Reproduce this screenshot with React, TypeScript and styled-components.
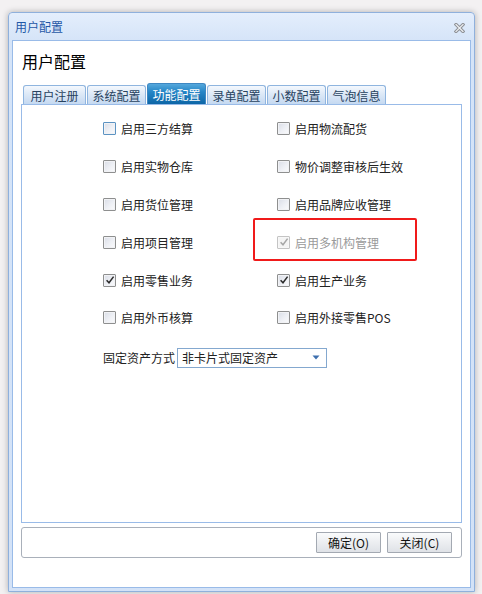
import React from "react";
import styled, { createGlobalStyle } from "styled-components";

const GlobalStyle = createGlobalStyle`
  html, body { margin: 0; padding: 0; background: #f3f1f2; }
  body { font-family: "Noto Sans CJK SC", "Noto Sans", sans-serif; font-size: 12px; color: #222; }
  * { box-sizing: border-box; }
`;

const Page = styled.div`
  padding: 12px 8px 0 8px;
  width: 482px;
  height: 594px;
`;

const Window = styled.div`
  width: 467px;
  height: 580px;
  border: 1px solid #8fb0dc;
  border-radius: 4px 4px 0 0;
  background: linear-gradient(#e4eefc 0px, #d5e4f8 28px, #d3e2f7 100%);
  box-shadow: 0 0 6px rgba(0, 0, 0, 0.28);
  padding: 0 3px 3px 3px;
  display: flex;
  flex-direction: column;
`;

const TitleBar = styled.div`
  height: 27px;
  display: flex;
  align-items: center;
  justify-content: space-between;
  padding: 0 6px 0 3px;
`;

const TitleText = styled.span`
  font-size: 12px;
  color: #1f57a6;
  line-height: 27px;
`;

const CloseTool = styled.span`
  width: 11px;
  height: 10px;
  display: inline-flex;
  margin-top: 2px;
`;

const Inner = styled.div`
  flex: 1;
  background: #fff;
  border: 1px solid #99bbe8;
  padding: 8px 8px 29px 8px;
  display: flex;
  flex-direction: column;
`;

const Heading = styled.div`
  font-size: 16px;
  line-height: 24px;
  color: #000;
  padding-left: 1px;
`;

const TabStrip = styled.div`
  margin-top: 10px;
  height: 21px;
  display: flex;
  align-items: flex-end;
  gap: 1px;
  padding-left: 2px;
`;

const Tab = styled.div<{ $active?: boolean; $wide?: boolean }>`
  width: ${(p) => (p.$wide ? "63px" : "59px")};
  height: ${(p) => (p.$active ? "21px" : "19px")};
  border: 1px solid ${(p) => (p.$active ? "#3e87c2" : "#8fb5df")};
  border-bottom: none;
  border-radius: 3px 3px 0 0;
  display: flex;
  align-items: center;
  justify-content: center;
  font-size: 12px;
  color: ${(p) => (p.$active ? "#fff" : "#28435f")};
  background: ${(p) =>
    p.$active
      ? "linear-gradient(#55a8dc 0%, #2585c6 40%, #0d66a6 100%)"
      : "linear-gradient(#f4f8fd 0%, #dde9f7 45%, #c5d9f1 100%)"};
`;

const TabPanel = styled.div`
  height: 419px;
  border: 1px solid #99bbe8;
  padding: 5px 0 0 81px;
`;

const Grid = styled.div`
  display: grid;
  grid-template-columns: 174px 174px;
  grid-auto-rows: 37.8px;
`;

const Cell = styled.label<{ $disabled?: boolean }>`
  position: relative;
  display: flex;
  align-items: center;
  gap: 5px;
  font-size: 12px;
  color: ${(p) => (p.$disabled ? "#9a9a9a" : "#222")};
`;

const Box = styled.span<{ $disabled?: boolean; $focus?: boolean }>`
  width: 13px;
  height: 13px;
  flex: none;
  border: 1px solid ${(p) => (p.$focus ? "#5c93c2" : p.$disabled ? "#c4c4c4" : "#8e8f8f")};
  border-radius: 1px;
  background: ${(p) =>
    p.$disabled
      ? "#f4f4f4"
      : "linear-gradient(135deg, #d9dde6 0%, #eef0f5 55%, #fbfbfc 100%)"};
  box-shadow: inset 0 0 0 1px ${(p) => (p.$disabled ? "#f7f7f7" : "#f1f2f5")};
  display: inline-flex;
  align-items: center;
  justify-content: center;
`;

const Highlight = styled.span`
  position: absolute;
  left: -24px;
  top: -5px;
  width: 164px;
  height: 43px;
  border: 2px solid #f01a1a;
  border-radius: 2px;
  pointer-events: none;
`;

const FieldRow = styled.div`
  margin-top: 11px;
  height: 20px;
  display: flex;
  align-items: center;
  gap: 2px;
  font-size: 12px;
`;

const Select = styled.div`
  width: 150px;
  height: 20px;
  border: 1px solid #84a8cf;
  padding: 0 6px 0 4px;
  display: flex;
  align-items: center;
  justify-content: space-between;
  background: #fff;
`;

const Footer = styled.div`
  margin-top: 4px;
  height: 31px;
  border: 1px solid #a9b0ba;
  border-radius: 3px;
  padding: 4px 9px 0 0;
  display: flex;
  justify-content: flex-end;
  align-items: flex-start;
  gap: 6px;
`;

const Button = styled.button`
  width: 65px;
  height: 21px;
  border: 1px solid #a3a9b2;
  border-radius: 1px;
  background: linear-gradient(#fafbfc 0%, #eceef1 50%, #dfe2e7 100%);
  font-family: "Noto Sans CJK SC", "Noto Sans", sans-serif;
  font-size: 12px;
  color: #111;
  padding: 0;
  display: flex;
  align-items: center;
  justify-content: center;
`;

type Item = { label: string; checked?: boolean; disabled?: boolean; focus?: boolean; mark?: boolean };

const items: Item[] = [
  { label: "启用三方结算", focus: true },
  { label: "启用物流配货" },
  { label: "启用实物仓库" },
  { label: "物价调整审核后生效" },
  { label: "启用货位管理" },
  { label: "启用品牌应收管理" },
  { label: "启用项目管理" },
  { label: "启用多机构管理", checked: true, disabled: true, mark: true },
  { label: "启用零售业务", checked: true },
  { label: "启用生产业务", checked: true },
  { label: "启用外币核算" },
  { label: "启用外接零售POS" },
];

const tabs = ["用户注册", "系统配置", "功能配置", "录单配置", "小数配置", "气泡信息"];

function Check({ disabled }: { disabled?: boolean }) {
  return (
    <svg width="10" height="10" viewBox="0 0 10 10">
      <path
        d="M1.6 5.2 L4 7.8 L8.6 1.6"
        fill="none"
        stroke={disabled ? "#a6a6a6" : "#2b2b2b"}
        strokeWidth="1.5"
      />
    </svg>
  );
}

export default function App() {
  return (
    <>
      <GlobalStyle />
      <Page>
        <Window>
          <TitleBar>
            <TitleText>用户配置</TitleText>
            <CloseTool>
              <svg width="11" height="10" viewBox="0 0 11 10">
                <path d="M2 1.5 L9 8.5 M9 1.5 L2 8.5" stroke="#8d9096" strokeWidth="3.2" strokeLinecap="square" />
                <path d="M2 1.5 L9 8.5 M9 1.5 L2 8.5" stroke="#eef0f3" strokeWidth="1.2" strokeLinecap="square" />
              </svg>
            </CloseTool>
          </TitleBar>
          <Inner>
            <Heading>用户配置</Heading>
            <TabStrip>
              {tabs.map((t, i) => (
                <Tab key={t} $active={t === "功能配置"} $wide={i === 0}>
                  {t}
                </Tab>
              ))}
            </TabStrip>
            <TabPanel>
              <Grid>
                {items.map((it) => (
                  <Cell key={it.label} $disabled={it.disabled}>
                    <Box $disabled={it.disabled} $focus={it.focus}>
                      {it.checked && <Check disabled={it.disabled} />}
                    </Box>
                    {it.label}
                    {it.mark && <Highlight />}
                  </Cell>
                ))}
              </Grid>
              <FieldRow>
                固定资产方式
                <Select>
                  非卡片式固定资产
                  <svg width="8" height="5" viewBox="0 0 8 5">
                    <path d="M0.5 0.5 L7.5 0.5 L4 4.5 Z" fill="#3d6fae" />
                  </svg>
                </Select>
              </FieldRow>
            </TabPanel>
            <Footer>
              <Button>确定(O)</Button>
              <Button>关闭(C)</Button>
            </Footer>
          </Inner>
        </Window>
      </Page>
    </>
  );
}
